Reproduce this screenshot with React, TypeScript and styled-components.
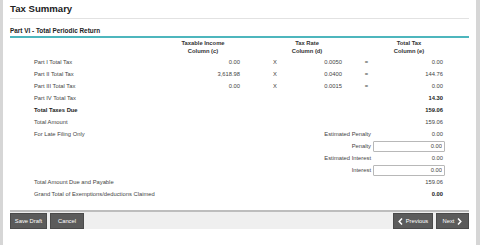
import React from "react";
import styled, { createGlobalStyle, css } from "styled-components";

const GlobalStyle = createGlobalStyle`
  html, body {
    margin: 0;
    padding: 0;
    background: #d6d6d6;
  }
  body {
    font-family: "Liberation Sans", Arial, sans-serif;
    color: #333;
  }
`;

const Page = styled.div`
  margin: 0 4px 0 3px;
  height: 245px;
  background: #fff;
  padding: 0 7px;
  box-sizing: border-box;
`;

const Title = styled.h1`
  margin: 0;
  height: 19px;
  border-bottom: 1px solid #e2e2e2;
  font-size: 9.6px;
  font-weight: 700;
  line-height: 18px;
  color: #222;
  box-sizing: border-box;
`;

const SectionTitle = styled.h2`
  margin: 5px 0 0;
  height: 12px;
  border-bottom: 2px solid #4db6bd;
  font-size: 6.4px;
  font-weight: 700;
  line-height: 13px;
  color: #222;
`;

const HeaderRow = styled.div`
  display: grid;
  grid-template-columns: 163px 60px 44px 60px 42px 60px;
  margin-top: 1px;
  font-size: 5.8px;
  font-weight: 700;
  line-height: 8px;
  color: #333;
`;

const HeaderCell = styled.div<{ $col: number }>`
  grid-column: ${({ $col }) => $col};
  text-align: center;
`;

const Table = styled.div`
  display: grid;
  grid-template-columns: 160px 70px 70px 32px 31px 72px 24px;
  grid-auto-rows: 12px;
  margin-top: 1px;
  font-size: 5.8px;
  color: #444;
  align-items: center;
`;

const Label = styled.div<{ $bold?: boolean }>`
  grid-column: 1;
  padding-left: 24px;
  white-space: nowrap;
  ${({ $bold }) => $bold && css`font-weight: 700; color: #222;`}
`;

const Num = styled.div<{ $col: number; $bold?: boolean }>`
  grid-column: ${({ $col }) => $col};
  text-align: right;
  padding-right: ${({ $col }) => ($col === 6 ? "2px" : "0")};
  ${({ $bold }) => $bold && css`font-weight: 700; color: #222;`}
`;

const Op = styled.div<{ $col: number; $shift?: number }>`
  grid-column: ${({ $col }) => $col};
  text-align: center;
  padding-left: ${({ $shift }) => $shift ?? 0}px;
`;

const SubLabel = styled.div`
  grid-column: 2 / 6;
  text-align: right;
  padding-right: 2px;
  white-space: nowrap;
`;

const Field = styled.input`
  grid-column: 6;
  height: 11px;
  width: 100%;
  box-sizing: border-box;
  border: 1px solid #b8b8b8;
  border-radius: 1px;
  padding: 0 2px;
  font-family: inherit;
  font-size: 5.8px;
  color: #444;
  text-align: right;
  outline: none;
`;

const Footer = styled.div`
  display: flex;
  align-items: flex-end;
  margin-top: 10px;
  height: 19px;
  border-top: 2px solid #bdbdbd;
  background: #efefef;
  box-sizing: border-box;
`;

const ButtonGroup = styled.div`
  display: flex;
  gap: 3px;
  &:last-child {
    margin-left: auto;
  }
`;

const ActionButton = styled.button<{ $w: number }>`
  display: flex;
  align-items: center;
  justify-content: center;
  gap: 3px;
  width: ${({ $w }) => $w}px;
  height: 16px;
  padding: 0;
  border: 1px solid #4a4a4a;
  background: #5b5b5b;
  color: #fff;
  font-family: inherit;
  font-size: 5.8px;
  cursor: pointer;
`;

const Chevron = ({ dir }: { dir: "left" | "right" }) => (
  <svg width="5" height="7" viewBox="0 0 5 7">
    <path
      d={dir === "left" ? "M4 0.6 L1.2 3.5 L4 6.4" : "M1 0.6 L3.8 3.5 L1 6.4"}
      fill="none"
      stroke="#fff"
      strokeWidth="1.5"
    />
  </svg>
);

type TaxRow = { label: string; c: string; d: string; e: string };

const taxRows: TaxRow[] = [
  { label: "Part I Total Tax", c: "0.00", d: "0.0050", e: "0.00" },
  { label: "Part II Total Tax", c: "3,618.98", d: "0.0400", e: "144.76" },
  { label: "Part III Total Tax", c: "0.00", d: "0.0015", e: "0.00" },
];

export default function App() {
  return (
    <>
      <GlobalStyle />
      <Page>
        <Title>Tax Summary</Title>
        <SectionTitle>Part VI - Total Periodic Return</SectionTitle>
        <HeaderRow>
          <HeaderCell $col={2}>Taxable Income<br />Column (c)</HeaderCell>
          <HeaderCell $col={4}>Tax Rate<br />Column (d)</HeaderCell>
          <HeaderCell $col={6}>Total Tax<br />Column (e)</HeaderCell>
        </HeaderRow>
        <Table>
          {taxRows.map((r) => (
            <React.Fragment key={r.label}>
              <Label>{r.label}</Label>
              <Num $col={2}>{r.c}</Num>
              <Op $col={3}>X</Op>
              <Num $col={4}>{r.d}</Num>
              <Op $col={5} $shift={18}>=</Op>
              <Num $col={6}>{r.e}</Num>
            </React.Fragment>
          ))}
          <Label>Part IV Total Tax</Label>
          <Num $col={6} $bold>14.30</Num>
          <Label $bold>Total Taxes Due</Label>
          <Num $col={6} $bold>159.06</Num>
          <Label>Total Amount</Label>
          <Num $col={6}>159.06</Num>
          <Label>For Late Filing Only</Label>
          <SubLabel>Estimated Penalty</SubLabel>
          <Num $col={6}>0.00</Num>
          <SubLabel>Penalty</SubLabel>
          <Field defaultValue="0.00" />
          <SubLabel>Estimated Interest</SubLabel>
          <Num $col={6}>0.00</Num>
          <SubLabel>Interest</SubLabel>
          <Field defaultValue="0.00" />
          <Label>Total Amount Due and Payable</Label>
          <Num $col={6}>159.06</Num>
          <Label>Grand Total of Exemptions/deductions Claimed</Label>
          <Num $col={6} $bold>0.00</Num>
        </Table>
        <Footer>
          <ButtonGroup>
            <ActionButton $w={37}>Save Draft</ActionButton>
            <ActionButton $w={34}>Cancel</ActionButton>
          </ButtonGroup>
          <ButtonGroup>
            <ActionButton $w={40}><Chevron dir="left" />Previous</ActionButton>
            <ActionButton $w={33}>Next<Chevron dir="right" /></ActionButton>
          </ButtonGroup>
        </Footer>
      </Page>
    </>
  );
}
